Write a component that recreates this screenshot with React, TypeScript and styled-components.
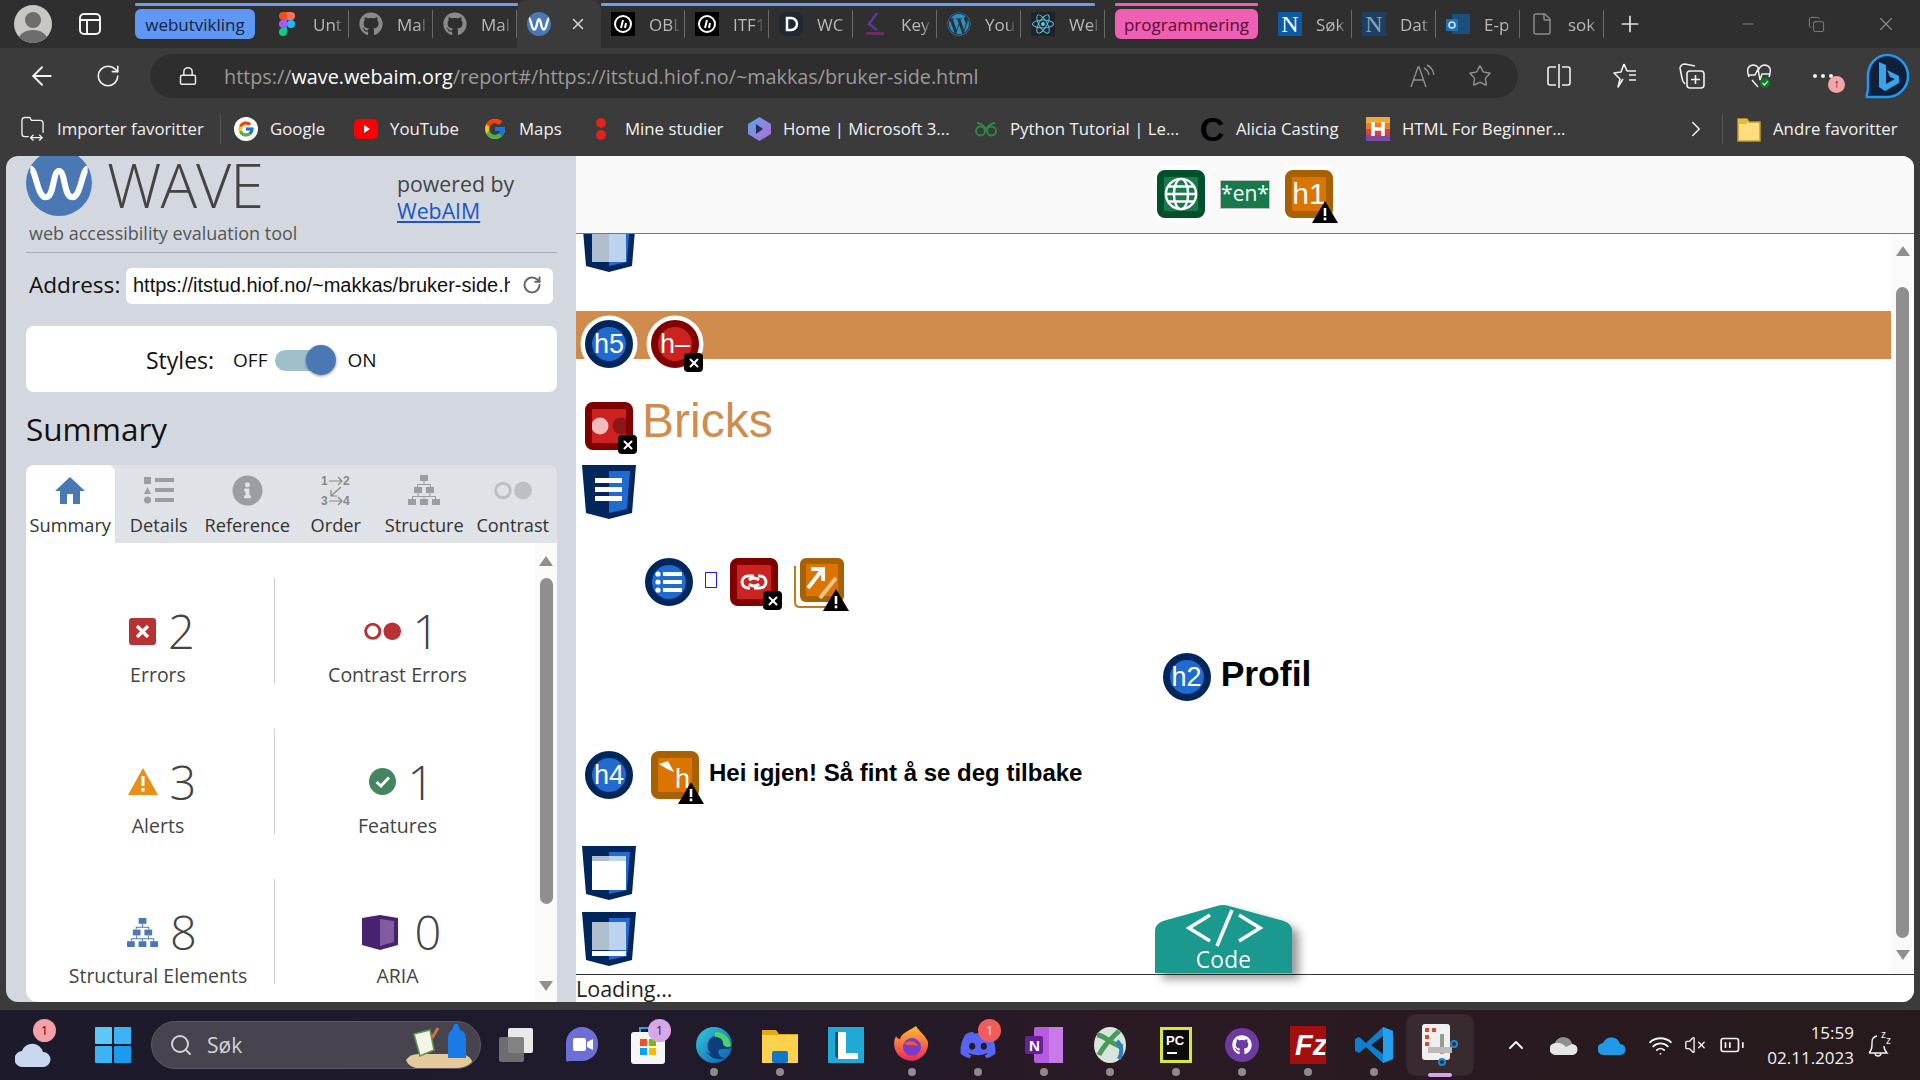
import React from "react";
import styled, { createGlobalStyle } from "styled-components";
import { ArrowLeft, RotateCw, Lock, Star, Plus, Minus, X, Copy, ChevronRight, ChevronUp, Search, Wifi, BatteryMedium, VolumeX, File } from "lucide-react";
import { FaGithub, FaWordpress, FaReact, FaDiscord, FaInfoCircle } from "react-icons/fa";
import { FcGoogle } from "react-icons/fc";

const Global = createGlobalStyle`
  html, body { margin: 0; padding: 0; width: 1920px; height: 1080px; overflow: hidden; background: #3b3b3b; }
  * { box-sizing: border-box; }
`;

const SANS = `"Open Sans", "Noto Sans", sans-serif`;
const ARIAL = `"Liberation Sans", Arial, sans-serif`;

const Page = styled.div`
  width: 1920px; height: 1080px; display: flex; flex-direction: column; overflow: hidden;
  font-family: ${SANS}; background: #3b3b3b;
`;

/* ---------- tab strip ---------- */
const TabStrip = styled.div`
  height: 48px; background: #2f2f2f; display: flex; align-items: stretch; padding-left: 14px; flex: none; position: relative;
`;
const Avatar = styled.div`
  width: 38px; height: 38px; border-radius: 50%; background: #c9c7c3; margin-top: 5px; overflow: hidden; display: flex; flex: none;
`;
const StripButton = styled.div`
  width: 38px; display: flex; align-items: center; justify-content: center; margin-left: 19px; color: #f2f2f2; flex: none;
`;
const GroupChip = styled.div<{ $bg: string; $fg: string; $w: number; $ml: number }>`
  flex: none; width: ${(p) => p.$w}px; margin: 9px 10px 9px ${(p) => p.$ml}px; height: 30px;
  background: ${(p) => p.$bg}; color: ${(p) => p.$fg}; border-radius: 6px; font-size: 17px; display: flex; align-items: center; justify-content: center;
`;
const GroupLine = styled.div<{ $l: number; $w: number; $c: string }>`
  position: absolute; top: 3px; left: ${(p) => p.$l}px; width: ${(p) => p.$w}px; height: 3px; background: ${(p) => p.$c}; border-radius: 1px;
`;
const Tab = styled.div`
  width: 84px; flex: none; display: flex; align-items: center; padding-left: 10px; position: relative; font-size: 17px; color: #b9b9b9; overflow: hidden;
  &::after { content: ""; position: absolute; right: 0; top: 10px; bottom: 10px; width: 1px; background: #6a6a6a; }
`;
const ActiveTab = styled(Tab)`
  background: #3b3b3b; border-radius: 10px 10px 0 0; color: #e8e8e8;
  &::after { display: none; }
`;
const TabIcon = styled.div`
  width: 24px; height: 24px; flex: none; display: flex; align-items: center; justify-content: center; margin-right: 14px;
`;
const TabLabel = styled.span`
  width: 31px; overflow: hidden; white-space: nowrap; flex: none;
  mask-image: linear-gradient(90deg, #000 70%, transparent);
`;
const CloseGlyph = styled.div`
  color: #d8d8d8; display: flex; margin-left: 4px;
`;
const WindowControls = styled.div`
  margin-left: auto; display: flex; color: #8c8c8c;
`;
const WindowControl = styled.div`
  width: 69px; display: flex; align-items: center; justify-content: center;
`;
const NewTab = styled.div`
  width: 52px; display: flex; align-items: center; justify-content: center; color: #e0e0e0; flex: none;
`;
const SquareFav = styled.div<{ $bg: string; $fg?: string }>`
  width: 24px; height: 24px; background: ${(p) => p.$bg}; color: ${(p) => p.$fg || "#fff"}; display: flex; align-items: center; justify-content: center;
  font: 400 24px "Liberation Serif", serif;
`;

/* ---------- toolbar ---------- */
const Toolbar = styled.div`
  height: 60px; flex: none; background: #3b3b3b; display: flex; align-items: center; color: #eee; padding: 0 0 4px 24px;
`;
const ToolButton = styled.div<{ $w?: number }>`
  width: ${(p) => p.$w || 66.5}px; display: flex; align-items: center; justify-content: center; flex: none; position: relative; color: #f0f0f0;
`;
const NavButton = styled.div`
  width: 36px; margin-right: 30px; display: flex; justify-content: center; flex: none; color: #f0f0f0;
`;
const AddressBar = styled.div`
  width: 1368px; height: 44px; margin-left: -6px; background: #2e2e2e; border-radius: 22px; display: flex; align-items: center; padding: 0 26px 0 28px; flex: none;
`;
const UrlLock = styled.div`
  display: flex; color: #e8e8e8; margin-right: 26px;
`;
const Url = styled.div`
  font-size: 19.8px; color: #9a9a9a; white-space: nowrap; flex: 1;
  b { font-weight: 400; color: #fff; }
`;
const UrlAction = styled.div`
  color: #8e8e8e; display: flex; margin-left: 32px;
`;
const Spacer = styled.div`
  width: 8px; flex: none;
`;
const Bing = styled.div`
  width: 46px; height: 46px; margin-left: 10px; display: flex; flex: none;
`;
const NotifyDot = styled.div`
  position: absolute; right: 9px; bottom: -14px; width: 17px; height: 17px; border-radius: 50%; background: #f4a5a5; color: #3a1010; font: 12px/17px ${ARIAL}; text-align: center;
`;

/* ---------- bookmarks ---------- */
const Bookmarks = styled.div`
  height: 48px; flex: none; background: #3b3b3b; display: flex; align-items: center; padding: 0 0 7px 21px; color: #f2f2f2; font-size: 16.8px;
`;
const Bookmark = styled.div<{ $w: number }>`
  display: flex; align-items: center; gap: 12px; width: ${(p) => p.$w}px; flex: none; white-space: nowrap;
`;
const BarSep = styled.div<{ $mr: number }>`
  width: 1px; height: 30px; background: #555; margin-right: ${(p) => p.$mr}px; flex: none;
`;
const BmIcon = styled.div`
  width: 24px; height: 24px; display: flex; align-items: center; justify-content: center; flex: none;
`;
const GoogleDisc = styled.div`
  width: 24px; height: 24px; background: #fff; border-radius: 50%; display: flex; align-items: center; justify-content: center;
`;
const AliciaC = styled.div`
  font: 900 34px "Liberation Sans", sans-serif; color: #000; line-height: 24px;
`;
const ChevronGap = styled.div`
  width: 13px; flex: none;
`;

/* ---------- content frame ---------- */
const Frame = styled.div`
  height: 846px; flex: none; display: flex; padding: 0 6px 0 6px;
`;
const Sidebar = styled.aside`
  width: 570px; flex: none; background: #d3d8e0; border-radius: 12px 0 0 12px; display: flex; flex-direction: column; overflow: hidden; padding: 0 19px 0 20px;
`;
const Masthead = styled.div`
  height: 97px; border-bottom: 1px solid #a9adb3; display: flex; flex: none;
`;
const BrandBlock = styled.div`
  width: 371px; flex: none;
`;
const BrandRow = styled.div`
  display: flex; height: 60px; gap: 15px; align-items: flex-start;
`;
const Logo = styled.svg`
  width: 66px; height: 66px; margin-top: -6px; flex: none;
`;
const WaveWord = styled.div`
  font-weight: 300; font-size: 61px; line-height: 60px; color: #444; letter-spacing: -1px; margin-top: -1px;
`;
const Tagline = styled.div`
  font-size: 18px; color: #555; margin: 5px 0 0 3px; line-height: 24px; white-space: nowrap;
`;
const PoweredBy = styled.div`
  font-size: 21.3px; color: #444; line-height: 33px; padding-top: 11px; white-space: nowrap;
  a { color: #1a56c8; text-decoration: underline; display: block; line-height: 22px; }
`;
const AddressRow = styled.div`
  display: flex; align-items: center; margin-top: 15px; height: 36px; flex: none; padding-left: 3px;
`;
const AddressLabel = styled.label`
  font-size: 22.6px; color: #111; width: 97px; flex: none; margin-top: -3px;
`;
const AddressField = styled.div`
  width: 427px; height: 36px; background: #fff; border-radius: 6px; display: flex; align-items: center; padding: 0 0 2px 7px; font: 20px ${ARIAL}; color: #111; flex: none; position: relative;
`;
const AddressText = styled.div`
  width: 377px; overflow: hidden; white-space: nowrap;
`;
const ReloadMini = styled.div`
  color: #666; display: flex; margin-left: 12px;
`;
const StylesCard = styled.div`
  height: 66px; margin-top: 22px; background: #fff; border-radius: 8px; display: flex; align-items: center; padding: 2px 0 0 120px; flex: none;
`;
const StylesLabel = styled.span`
  font-size: 23px; color: #111; margin-right: 19px;
`;
const SwitchText = styled.span`
  font-size: 19px; color: #111;
`;
const Switch = styled.div`
  width: 55px; height: 21px; background: #9fc0cb; border-radius: 11px; margin: 0 17px 0 8px; position: relative; flex: none;
`;
const Knob = styled.div`
  position: absolute; right: -6px; top: -5px; width: 30px; height: 30px; border-radius: 50%; background: #4a78b5; box-shadow: 0 1px 3px rgba(0, 0, 0, .45);
`;
const SummaryTitle = styled.h2`
  font-weight: 400; font-size: 31.5px; color: #111; margin: 9px 0 0 0; line-height: 56px; flex: none; height: 64px;
`;
const TabRow = styled.div`
  display: flex; height: 78px; background: #dfe2e7; border-radius: 8px 8px 0 0; flex: none;
`;
const PanelTab = styled.div<{ $active?: boolean }>`
  flex: 1; display: flex; flex-direction: column; align-items: center; background: ${(p) => (p.$active ? "#fff" : "transparent")};
  border-radius: 8px 8px 0 0; font-size: 18.2px; color: #333; padding-top: 8px; white-space: nowrap;
`;
const PanelTabIcon = styled.div`
  height: 34px; display: flex; align-items: center; justify-content: center;
`;
const PanelTabLabel = styled.div`
  margin-top: 6px; line-height: 24px;
`;
const Panel = styled.div`
  flex: 1; background: #fff; display: flex; border-radius: 0 0 0 12px; overflow: hidden; min-height: 0;
`;
const StatGrid = styled.div`
  width: 509px; flex: none; display: grid; grid-template-columns: 249px 260px; grid-auto-rows: 105px; row-gap: 45.5px; padding-top: 35px; align-content: start;
`;
const Stat = styled.div<{ $left?: boolean }>`
  display: flex; flex-direction: column; align-items: center; padding-top: 25px;
  ${(p) => (p.$left ? "border-right: 1px solid #cfcfcf; padding-left: 16px;" : "padding-right: 15px;")}
`;
const StatValue = styled.div`
  display: flex; align-items: center; gap: 12px; height: 56px; font-weight: 300; font-size: 47px; color: #444; line-height: 56px; margin-left: 8px;
`;
const StatLabel = styled.div`
  font-size: 19.5px; color: #444; line-height: 30px; margin-top: 1px; white-space: nowrap;
`;
const Rail = styled.div<{ $w: number; $pt: number }>`
  width: ${(p) => p.$w}px; flex: none; background: #fafafa; display: flex; flex-direction: column; align-items: center; padding-top: ${(p) => p.$pt}px;
`;
const RailArrow = styled.div<{ $down?: boolean; $c: string }>`
  width: 0; height: 0; border-left: 7px solid transparent; border-right: 7px solid transparent; flex: none;
  ${(p) => (p.$down ? `border-top: 10px solid ${p.$c};` : `border-bottom: 10px solid ${p.$c};`)}
`;
const RailThumb = styled.div<{ $mt: number; $h: number; $w: number; $c: string }>`
  width: ${(p) => p.$w}px; height: ${(p) => p.$h}px; margin-top: ${(p) => p.$mt}px; background: ${(p) => p.$c}; border-radius: 7px; flex: none;
`;
const RailDown = styled.div<{ $mt: number }>`
  margin-top: ${(p) => p.$mt}px; flex: none;
`;

/* ---------- report ---------- */
const Report = styled.main`
  width: 1338px; flex: none; background: #fff; border-radius: 0 12px 12px 0; display: flex; flex-direction: column; overflow: hidden; position: relative;
`;
const ReportBar = styled.div`
  height: 78px; flex: none; background: #f9f9f9; border-bottom: 1px solid #777; display: flex; align-items: center; justify-content: center; gap: 15px; padding: 0 0 1px 0;
`;
const LangChip = styled.div`
  width: 50px; height: 29px; background: #187a4a; border: 1px solid #c0c0c0; color: #fff; font-size: 21px; line-height: 24px; text-align: center; white-space: nowrap;
`;
const ReportBody = styled.div`
  flex: 1; display: flex; min-height: 0;
`;
const Canvas = styled.div`
  flex: 1; min-width: 0; overflow: hidden;
`;
const CutRow = styled.div`
  height: 77px; padding-left: 6px; overflow: hidden;
`;
const CutShield = styled.div`
  margin-top: -16px;
`;
const Banner = styled.div`
  height: 48px; background: #d08c4c; display: flex; align-items: flex-start; gap: 18px; padding: 9px 0 0 9px;
`;
const BrickRow = styled.div`
  display: flex; padding: 43px 0 0 9px; gap: 9px; height: 106px;
`;
const Bricks = styled.h1`
  margin: -11px 0 0; font: 400 48px ${ARIAL}; color: #d08c4c; line-height: 60px;
`;
const ShieldRow = styled.div<{ $mt?: number }>`
  padding-left: 6px; height: 54px; margin-top: ${(p) => p.$mt || 0}px;
`;
const NavRow = styled.div`
  display: flex; align-items: flex-start; padding-left: 69px; margin-top: 39px; height: 48px;
`;
const Tofu = styled.a`
  width: 12px; height: 16px; border: 1px solid #2020ff; margin: 14px 13px 0 12px; flex: none;
`;
const OrangeGap = styled.div`
  width: 16px; flex: none;
`;
const StackedIcon = styled.div`
  position: relative; width: 50px; height: 50px; flex: none;
`;
const ProfilRow = styled.div`
  display: flex; justify-content: center; gap: 10px; margin-top: 47px; height: 48px; padding-left: 7px;
`;
const ProfilTitle = styled.h2`
  margin: -1px 0 0; font: 700 35.5px ${ARIAL}; color: #000; line-height: 44px;
`;
const GreetRow = styled.div`
  display: flex; gap: 18px; margin-top: 50px; height: 48px; padding-left: 9px; align-items: flex-start;
`;
const Greeting = styled.h4`
  margin: 0 0 0 -8px; font: 700 24px ${ARIAL}; color: #000; line-height: 44px; white-space: nowrap;
`;
const StatusBar = styled.div`
  height: 28px; flex: none; border-top: 1px solid #333; background: #fff; font-size: 21.5px; line-height: 27px; color: #222;
`;
const CodeTab = styled.div`
  position: absolute; left: 579px; top: 749px; width: 137px; height: 68px; filter: drop-shadow(7px 6px 5px rgba(0, 0, 0, .4));
  display: flex; flex-direction: column; align-items: center; color: #fff;
`;
const CodeRoof = styled.svg`
  position: absolute; left: 0; top: 0; width: 137px; height: 68px;
`;
const CodeText = styled.div`
  position: absolute; left: 0; right: 0; bottom: 0; text-align: center; font-size: 23px; line-height: 28px;
`;

/* ---------- WAVE icons ---------- */
const Mark = styled.div<{ $round?: boolean; $rim: string; $fill: string; $size?: number }>`
  width: 48px; height: 48px; flex: none; position: relative; border: 7px solid ${(p) => p.$rim}; background: ${(p) => p.$fill};
  border-radius: ${(p) => (p.$round ? "50%" : "8px")}; display: flex; align-items: center; justify-content: center; color: #fff;
  font: ${(p) => p.$size || 27}px ${ARIAL}; line-height: 1; white-space: nowrap;
`;
const Ringed = styled(Mark)`
  box-shadow: 0 0 0 4.5px #fff;
`;
const XBadge = styled.div`
  position: absolute; right: -11px; bottom: -11px; width: 19px; height: 19px; background: #000; border-radius: 4px; display: flex; align-items: center; justify-content: center; color: #fff;
`;
const WarnBadge = styled.svg`
  position: absolute; right: -12px; bottom: -12px; width: 26px; height: 22px;
`;
const StackedWarn = styled(WarnBadge)`
  right: -5px; bottom: -3px;
`;

const XB = () => (
  <XBadge>
    <X size={14} strokeWidth={3.5} />
  </XBadge>
);
const WarnGlyph = () => (
  <>
    <path d="M13 0 L26 22 H0Z" fill="#000" />
    <rect x="11.7" y="7" width="2.6" height="8" fill="#fff" />
    <rect x="11.7" y="16.5" width="2.6" height="2.8" fill="#fff" />
  </>
);
const WarnB = () => (
  <WarnBadge viewBox="0 0 26 22">
    <WarnGlyph />
  </WarnBadge>
);

type ShieldKind = "box" | "lines" | "top" | "bottom";
const Shield = ({ kind }: { kind: ShieldKind }) => (
  <svg width="54" height="54" viewBox="0 0 54 54" style={{ display: "block" }}>
    <path d="M0 0H54L50 48L27 54L4 48Z" fill="#00265c" />
    <path d="M27 6H48L45 44L27 48Z" fill="#1f6bd0" />
    {kind === "lines" && (
      <g fill="#fff">
        <rect x="13" y="13" width="27" height="5" />
        <rect x="13" y="22" width="27" height="5" />
        <rect x="13" y="31" width="27" height="5" />
      </g>
    )}
    {kind === "box" && (
      <g>
        <rect x="10" y="10" width="17" height="34" fill="#b0bfcf" />
        <rect x="27" y="10" width="17" height="34" fill="#bcd3ee" />
      </g>
    )}
    {kind === "top" && (
      <g>
        <rect x="10" y="10" width="34" height="34" fill="#fff" />
        <rect x="10" y="10" width="17" height="5" fill="#b0bfcf" />
        <rect x="27" y="10" width="17" height="5" fill="#bcd3ee" />
      </g>
    )}
    {kind === "bottom" && (
      <g>
        <rect x="10" y="10" width="17" height="28" fill="#b0bfcf" />
        <rect x="27" y="10" width="17" height="28" fill="#bcd3ee" />
        <rect x="10" y="39" width="34" height="5" fill="#fff" />
      </g>
    )}
  </svg>
);

/* ---------- small drawn favicons ---------- */
const WaveFav = () => (
  <svg width="24" height="24" viewBox="0 0 60 60">
    <circle cx="30" cy="30" r="30" fill="#4a78b5" />
    <path d="M5 16C10 16 11 44 18 44C26 44 24 18 30 18C36 18 34 44 42 44C49 44 50 16 55 16" fill="none" stroke="#fff" strokeWidth="6" />
  </svg>
);
const FigmaFav = () => (
  <svg width="16" height="24" viewBox="0 0 16 24">
    <path d="M8 0H4a4 4 0 0 0 0 8h4z" fill="#f24e1e" />
    <path d="M8 0h4a4 4 0 0 1 0 8H8z" fill="#ff7262" />
    <path d="M8 8H4a4 4 0 0 0 0 8h4z" fill="#a259ff" />
    <circle cx="12" cy="12" r="4" fill="#1abcfe" />
    <path d="M4 16h4v4a4 4 0 1 1-4-4z" fill="#0acf83" />
  </svg>
);
const ThreadFav = () => (
  <svg width="24" height="24" viewBox="0 0 24 24">
    <rect width="24" height="24" fill="#000" />
    <circle cx="12" cy="12" r="8" fill="none" stroke="#fff" strokeWidth="2" />
    <path d="M10 16L12 8M14 16L15 11" stroke="#fff" strokeWidth="2" />
  </svg>
);
const DFav = () => (
  <svg width="24" height="24" viewBox="0 0 24 24">
    <rect width="24" height="24" rx="7" fill="#1f2733" />
    <path d="M8 6h4a6 6 0 0 1 0 12H8z" fill="none" stroke="#fff" strokeWidth="2.5" />
  </svg>
);
const KeyFav = () => (
  <svg width="24" height="24" viewBox="0 0 24 24">
    <path d="M14 1L6 12L14 18" fill="none" stroke="#5b3a96" strokeWidth="2.5" />
    <rect x="3" y="20" width="18" height="3" fill="#6b2f5f" />
  </svg>
);
const OutlookFav = () => (
  <svg width="24" height="24" viewBox="0 0 24 24">
    <rect x="6" y="2" width="18" height="20" fill="#1a4f7e" />
    <rect x="0" y="7" width="12" height="12" fill="#1f6fb2" />
    <circle cx="6" cy="13" r="3" fill="none" stroke="#cfe4f5" strokeWidth="1.6" />
  </svg>
);
const ImportIcon = () => (
  <svg width="25" height="26" viewBox="0 0 25 26" fill="none" stroke="#f2f2f2" strokeWidth="1.4">
    <path d="M8 21H4a3 3 0 0 1-3-3V4a3 3 0 0 1 3-3h5l2 3h9a3 3 0 0 1 3 3v10" />
    <path d="M10 22H22M13 19l-3 3 3 3M19 19l3 3-3 3" />
  </svg>
);
const YtIcon = () => (
  <svg width="24" height="20" viewBox="0 0 24 20">
    <rect width="24" height="20" rx="5" fill="#f00" />
    <path d="M10 6l6 4-6 4z" fill="#fff" />
  </svg>
);
const DotsIcon = () => (
  <svg width="14" height="24" viewBox="0 0 14 24">
    <ellipse cx="7" cy="6" rx="5" ry="5" fill="#e0231c" />
    <ellipse cx="7" cy="18" rx="5" ry="5" fill="#e0231c" />
  </svg>
);
const MsIcon = () => (
  <svg width="23" height="24" viewBox="0 0 23 24">
    <defs>
      <linearGradient id="msg" x1="0" y1="0" x2="1" y2="1">
        <stop offset="0" stopColor="#5aa5ea" />
        <stop offset="1" stopColor="#b46bd8" />
      </linearGradient>
    </defs>
    <path d="M11.5 0L23 7v10L11.5 24L0 17V7z" fill="url(#msg)" />
    <path d="M8 7l7 5-7 5z" fill="#2a2a55" />
  </svg>
);
const GlassesIcon = () => (
  <svg width="24" height="16" viewBox="0 0 24 16" fill="none" stroke="#2e8b46" strokeWidth="1.8">
    <path d="M3 2C6 2 9 4 12 8C15 4 18 2 21 2M12 8" />
    <circle cx="6.500" cy="10" r="4.500" />
    <circle cx="17.500" cy="10" r="4.500" />
  </svg>
);
const HtmlIcon = () => (
  <svg width="24" height="24" viewBox="0 0 24 24">
    <rect width="24" height="6" fill="#f2a83b" />
    <rect y="6" width="24" height="6" fill="#ee7a2c" />
    <rect y="12" width="24" height="6" fill="#d9433f" />
    <rect y="18" width="24" height="6" fill="#7c4a9e" />
    <path d="M7 5v14M17 5v14M7 12h10" stroke="#fff" strokeWidth="3.5" />
  </svg>
);
const FolderIcon = () => (
  <svg width="24" height="26" viewBox="0 0 24 26">
    <path d="M1 3h9l2 3h11v19H1z" fill="#ffdd80" stroke="#c89b2a" strokeWidth="1.5" />
    <path d="M1 3h9v5H1z" fill="#e7b93a" />
  </svg>
);

/* ---------- toolbar icons ---------- */
const ReadAloud = () => (
  <svg width="26" height="24" viewBox="0 0 26 24" fill="none" stroke="#8e8e8e" strokeWidth="1.4">
    <path d="M1 23L8 3H9L16 23M4 16H13" />
    <path d="M14 4Q18 6 19 11M17 1Q23 4 24 11" />
  </svg>
);
const SplitIcon = () => (
  <svg width="24" height="26" viewBox="0 0 24 26" fill="none" stroke="#f0f0f0" strokeWidth="1.6">
    <path d="M9 4H3a2 2 0 0 0-2 2v14a2 2 0 0 0 2 2h6M15 4h6a2 2 0 0 1 2 2v14a2 2 0 0 1-2 2h-6M12 1V25" />
  </svg>
);
const FavListIcon = () => (
  <svg width="26" height="26" viewBox="0 0 26 26" fill="none" stroke="#f0f0f0" strokeWidth="1.6" strokeLinejoin="round">
    <path d="M11 1L14 8H23M16 12H23M16 17H23M10 16L5 24L7 16L1 10L8 9L11 1" />
  </svg>
);
const CollectionsIcon = () => (
  <svg width="26" height="26" viewBox="0 0 26 26" fill="none" stroke="#f0f0f0" strokeWidth="1.6">
    <path d="M16 3L6 1Q2 1 1 5L3 15Q3 18 6 21" />
    <rect x="8" y="8" width="17" height="17" rx="3" />
    <path d="M16.500 12V21M12 16.500H21" />
  </svg>
);
const HealthIcon = () => (
  <svg width="26" height="26" viewBox="0 0 26 26">
    <path d="M3 14Q-1 3 7 2Q11 2 13 6Q15 2 19 2Q27 3 23 14M3 12H9L12 6L14 17L16 11H24M6 17L12 24" fill="none" stroke="#f0f0f0" strokeWidth="1.5" />
    <circle cx="19" cy="20" r="5" fill="#0f7a25" />
    <path d="M16.500 20L18.500 22L22 18" fill="none" stroke="#cde8d2" strokeWidth="1.2" />
  </svg>
);
const DotsMenu = () => (
  <svg width="22" height="6" viewBox="0 0 22 6" fill="#f0f0f0">
    <circle cx="3" cy="3" r="2" />
    <circle cx="11" cy="3" r="2" />
    <circle cx="19" cy="3" r="2" />
  </svg>
);

/* ---------- panel tab icons ---------- */
const HomeIcon = () => (
  <svg width="30" height="27" viewBox="0 0 30 27" fill="#4a78b5">
    <path d="M15 0L30 14H25V27H18V17H12V27H5V14H0Z" />
  </svg>
);
const ListIcon = () => (
  <svg width="30" height="28" viewBox="0 0 30 28" fill="#9a9ea3">
    <rect x="0" y="1" width="7" height="7" />
    <rect x="11" y="2" width="19" height="4" />
    <path d="M3.5 11L7 18H0z" />
    <rect x="11" y="12" width="19" height="4" />
    <circle cx="3.5" cy="24" r="3.5" />
    <rect x="11" y="22" width="19" height="4" />
  </svg>
);
const OrderIcon = () => (
  <svg width="30" height="34" viewBox="0 0 30 34">
    <g fontFamily="Liberation Sans, sans-serif" fontWeight="700" fontSize="12" fill="#888">
      <text x="0" y="12">1</text>
      <text x="22" y="12">2</text>
      <text x="0" y="32">3</text>
      <text x="22" y="32">4</text>
    </g>
    <path d="M8 8H21M17 4l4 4-4 4M8 28H21M17 24l4 4-4 4M20 14L10 23M10 17v6h6" fill="none" stroke="#888" strokeWidth="1.2" />
  </svg>
);
const TreeIcon = ({ color, w, h }: { color: string; w: number; h: number }) => (
  <svg width={w} height={h} viewBox="0 0 32 30" fill={color}>
    <rect x="12" y="0" width="8" height="6" />
    <rect x="6" y="12" width="8" height="6" />
    <rect x="18" y="12" width="8" height="6" />
    <rect x="0" y="24" width="8" height="6" />
    <rect x="12" y="24" width="8" height="6" />
    <rect x="24" y="24" width="8" height="6" />
    <path d="M15.5 6h1v3H23v3h-1v-2H10v2H9V9h6.500zM9.500 18h1v3H28v3h-1v-2H5v2H4v-3h5.500zM15.500 22h1v2h-1zM21.500 18h1v3h-1z" />
  </svg>
);
const ContrastIcon = ({ color, w }: { color: string; w: number }) => (
  <svg width={w} height={w * 0.5} viewBox="0 0 38 19">
    <circle cx="9" cy="9.500" r="7.300" fill="none" stroke={color} strokeWidth="3" />
    <circle cx="29" cy="9.500" r="9" fill={color} />
  </svg>
);
const ErrorIcon = () => (
  <svg width="27" height="27" viewBox="0 0 27 27">
    <rect width="27" height="27" rx="3" fill="#b83233" />
    <path d="M8 8L19 19M19 8L8 19" stroke="#fff" strokeWidth="3.500" />
  </svg>
);
const AlertIcon = () => (
  <svg width="30" height="27" viewBox="0 0 30 27">
    <path d="M15 0L30 27H0Z" fill="#e69016" />
    <rect x="13.500" y="8" width="3" height="10" fill="#fff" />
    <rect x="13.500" y="20" width="3" height="3.500" fill="#fff" />
  </svg>
);
const FeatureIcon = () => (
  <svg width="27" height="27" viewBox="0 0 27 27">
    <circle cx="13.500" cy="13.500" r="13.500" fill="#45855f" />
    <path d="M7.500 14L12 18L20 9.500" fill="none" stroke="#fff" strokeWidth="3" />
  </svg>
);
const AriaIcon = () => (
  <svg width="41" height="35" viewBox="0 0 41 35">
    <path d="M0 3L18 0L36 3V30L18 35L0 30Z" fill="#46226f" />
    <path d="M18 4L32 6V27L18 31Z" fill="#7f5c9f" />
  </svg>
);

/* ---------- taskbar ---------- */
const Taskbar = styled.div`
  height: 71px; margin-top: 7px; flex: none; background: linear-gradient(90deg, #1c1a2b 0%, #201a2c 35%, #2a1a24 60%, #271a1c 100%);
  border-top: 1px solid #3f3a3c; display: flex; align-items: center; position: relative; color: #f2f2f2;
`;
const Weather = styled.div`
  width: 66px; height: 60px; flex: none; position: relative; display: flex; align-items: center; padding-left: 15px; padding-top: 18px;
`;
const StartSlot = styled.div`
  width: 36px; margin-left: 29px; margin-right: 20px; flex: none; display: flex;
`;
const SearchBox = styled.div`
  width: 330px; height: 48px; border-radius: 24px; background: #47434f; border: 1px solid #5d5964; display: flex; align-items: center; padding-left: 17px; font-size: 21px; color: #d4d2d6; flex: none; position: relative;
`;
const SearchArt = styled.svg`
  position: absolute; right: 8px; top: 2px; width: 66px; height: 44px;
`;
const SearchLabel = styled.span`
  margin-left: 14px;
`;
const Apps = styled.div`
  display: flex; margin-left: 2px; flex: none;
`;
const AppSlot = styled.div<{ $active?: boolean }>`
  width: 66px; height: 60px; flex: none; display: flex; align-items: center; justify-content: center; position: relative; border-radius: 8px;
  ${(p) => (p.$active ? "background: rgba(255,255,255,.07); outline: 1px solid rgba(255,255,255,.05);" : "")}
`;
const RunDot = styled.div`
  position: absolute; bottom: -1px; left: 50%; margin-left: -4px; width: 8px; height: 8px; border-radius: 50%; background: #8f8b8d;
`;
const ActiveBar = styled.div`
  position: absolute; bottom: -2px; left: 50%; margin-left: -12px; width: 24px; height: 4px; border-radius: 2px; background: #d7a6e4;
`;
const Count = styled.div<{ $bg: string; $fg: string }>`
  position: absolute; width: 23px; height: 23px; border-radius: 50%; background: ${(p) => p.$bg}; color: ${(p) => p.$fg}; font-size: 13px; line-height: 23px; text-align: center;
  top: 4px; right: 10px;
`;
const Tray = styled.div`
  display: flex; align-items: center; margin-left: 19px; flex: none;
`;
const TrayItem = styled.div<{ $w: number }>`
  width: ${(p) => p.$w}px; display: flex; justify-content: center; flex: none;
`;
const Clock = styled.div`
  width: 102px; text-align: right; font-size: 17px; line-height: 25px; flex: none; margin-left: -6px;
`;
const Bell = styled.div`
  margin-left: 13px; display: flex; flex: none;
`;

const taskIcons: Record<string, React.ReactNode> = {
  task: (
    <svg width="36" height="36" viewBox="0 0 36 36">
      <rect x="10" y="1" width="25" height="25" rx="2" fill="#e9e9e9" />
      <rect x="1" y="10" width="25" height="25" rx="2" fill="#777" opacity=".9" />
    </svg>
  ),
  chat: (
    <svg width="34" height="38" viewBox="0 0 34 38">
      <path d="M17 1a16 16 0 0 1 16 16v2a16 16 0 0 1-16 16H4q-3 2-3-2V17A16 16 0 0 1 17 1z" fill="#6b6fd6" />
      <rect x="8" y="12" width="13" height="13" rx="2" fill="#fff" />
      <path d="M22 16l6-3v11l-6-3z" fill="#fff" />
    </svg>
  ),
  store: (
    <svg width="36" height="38" viewBox="0 0 36 38">
      <path d="M10 6V2h16v4" fill="none" stroke="#2f9be8" strokeWidth="2" />
      <rect x="1" y="6" width="34" height="32" rx="3" fill="#f6f6f6" />
      <rect x="10" y="13" width="7" height="7" fill="#f25022" />
      <rect x="19" y="13" width="7" height="7" fill="#7fba00" />
      <rect x="10" y="22" width="7" height="7" fill="#00a4ef" />
      <rect x="19" y="22" width="7" height="7" fill="#ffb900" />
    </svg>
  ),
  edge: (
    <svg width="38" height="38" viewBox="0 0 38 38">
      <defs>
        <linearGradient id="eg" x1="0" y1="0" x2="1" y2="1">
          <stop offset="0" stopColor="#36c8d8" />
          <stop offset="1" stopColor="#0a5fb5" />
        </linearGradient>
      </defs>
      <circle cx="19" cy="19" r="18" fill="url(#eg)" />
      <path d="M37 22C36 12 28 8 20 10C12 12 10 22 16 28C12 28 10 24 10 20C10 30 22 36 30 32C26 32 22 28 24 24C26 22 34 24 37 22Z" fill="#0c3f7a" />
      <path d="M20 6a15 15 0 0 1 16 14c-2 2-8 1-8-3c0-4-4-6-8-6z" fill="#4fd06a" />
    </svg>
  ),
  files: (
    <svg width="36" height="36" viewBox="0 0 36 36">
      <path d="M0 3h14l3 4h19v29H0z" fill="#e6a817" />
      <rect y="8" width="36" height="28" fill="#ffd24d" />
      <rect x="10" y="24" width="16" height="12" rx="2" fill="#1277c9" />
    </svg>
  ),
  l: (
    <svg width="36" height="36" viewBox="0 0 36 36">
      <rect width="36" height="36" fill="#1fa9d6" />
      <path d="M10 5h8v21h12v6H10z" fill="#fff" />
      <path d="M10 32l-3-3V5h3z" fill="#13527a" />
    </svg>
  ),
  fox: (
    <svg width="36" height="38" viewBox="0 0 36 38">
      <defs>
        <linearGradient id="fg" x1="0" y1="0" x2="0" y2="1">
          <stop offset="0" stopColor="#ffbd2e" />
          <stop offset="1" stopColor="#e9295b" />
        </linearGradient>
      </defs>
      <path d="M22 0c3 5 10 10 12 16a17 17 0 1 1-32-6c1 2 2 3 4 3c1-6 9-8 16-13z" fill="url(#fg)" />
      <circle cx="18" cy="21" r="9" fill="#7a3bc8" />
      <path d="M10 18c4-4 12-4 14 2c-4-2-8 0-14-2z" fill="#f55a36" />
    </svg>
  ),
  onenote: (
    <svg width="38" height="36" viewBox="0 0 38 36">
      <rect x="9" y="0" width="29" height="36" rx="2" fill="#b55ce0" />
      <rect x="24" y="0" width="14" height="36" fill="#c77ae8" />
      <rect x="0" y="9" width="18" height="18" rx="2" fill="#6a1f9a" />
      <text x="4" y="24" fontSize="15" fontFamily="Liberation Sans, sans-serif" fontWeight="700" fill="#fff">N</text>
    </svg>
  ),
  globe: (
    <svg width="34" height="36" viewBox="0 0 34 36">
      <ellipse cx="17" cy="18" rx="16" ry="18" fill="#d8e4dc" />
      <path d="M4 8c8 0 14 10 26 12M6 28c6-12 14-18 20-24" fill="none" stroke="#4a9a5a" strokeWidth="5" />
      <path d="M24 14c4 4 6 10 2 18" fill="none" stroke="#2a7fc0" strokeWidth="4" />
    </svg>
  ),
  pc: (
    <svg width="32" height="36" viewBox="0 0 32 36">
      <rect width="32" height="36" fill="#d8e83a" />
      <rect x="3" y="3" width="26" height="30" fill="#0c0c0c" />
      <text x="6" y="18" fontSize="13" fontFamily="Liberation Sans, sans-serif" fontWeight="700" fill="#fff">PC</text>
      <rect x="7" y="25" width="10" height="2" fill="#fff" />
    </svg>
  ),
  gh: (
    <svg width="34" height="36" viewBox="0 0 34 36">
      <circle cx="17" cy="18" r="17" fill="#6f3ba0" />
      <foreignObject x="7" y="8" width="20" height="20">
        <FaGithub size={20} color="#fff" />
      </foreignObject>
    </svg>
  ),
  fz: (
    <svg width="36" height="38" viewBox="0 0 36 38">
      <rect width="36" height="38" fill="#a40e0e" />
      <text x="5" y="29" fontSize="29" fontStyle="italic" fontFamily="Liberation Sans, sans-serif" fontWeight="700" fill="#fff">Fz</text>
    </svg>
  ),
  code: (
    <svg width="38" height="38" viewBox="0 0 38 38">
      <path d="M28 1L38 5V33L28 37L11 21L4 27L0 25V13L4 11L11 17z" fill="#0c7fd0" />
      <path d="M28 10V28L16 19z" fill="#1c1a20" />
      <path d="M28 1L38 5V33L28 37z" fill="#23a0ee" />
    </svg>
  ),
  snip: (
    <svg width="36" height="42" viewBox="0 0 36 42">
      <rect x="0" y="0" width="28" height="36" rx="3" fill="#f0f0ee" />
      <g fill="#d84a2a">
        <rect x="3" y="4" width="4" height="4" />
        <rect x="10" y="4" width="4" height="4" />
        <rect x="3" y="11" width="4" height="4" />
        <rect x="3" y="18" width="4" height="4" />
      </g>
      <path d="M20 10V30" stroke="#999" strokeWidth="4" />
      <rect x="6" y="23" width="24" height="6" fill="#bbb" />
      <circle cx="32" cy="20" r="3" fill="none" stroke="#1c8ad8" strokeWidth="2" />
      <circle cx="20" cy="38" r="3" fill="none" stroke="#1c8ad8" strokeWidth="2" />
    </svg>
  ),
};

type AppDef = { key: string; dot?: boolean; count?: [string, string]; node?: React.ReactNode; active?: boolean };
const apps: AppDef[] = [
  { key: "task" },
  { key: "chat" },
  { key: "store", count: ["#d6a8e8", "#3a2340"] },
  { key: "edge", dot: true },
  { key: "files", dot: true },
  { key: "l" },
  { key: "fox", dot: true },
  { key: "discord", dot: true, count: ["#f25c5c", "#fff"], node: <FaDiscord size={38} color="#5865f2" /> },
  { key: "onenote", dot: true },
  { key: "globe", dot: true },
  { key: "pc", dot: true },
  { key: "gh", dot: true },
  { key: "fz", dot: true },
  { key: "code", dot: true },
  { key: "snip", active: true },
];

const tabsA: [React.ReactNode, string][] = [
  [<FigmaFav />, "Unt"],
  [<FaGithub size={24} color="#8a8a8a" />, "Mal"],
  [<FaGithub size={24} color="#8a8a8a" />, "Mal"],
];
const tabsB: [React.ReactNode, string][] = [
  [<ThreadFav />, "OBL"],
  [<ThreadFav />, "ITF1"],
  [<DFav />, "WC"],
  [<KeyFav />, "Key"],
  [<FaWordpress size={24} color="#2a8fc4" />, "You"],
  [<SquareFav $bg="#20232a"><FaReact size={22} color="#61c8e0" /></SquareFav>, "Wel"],
];
const tabsC: [React.ReactNode, string][] = [
  [<SquareFav $bg="#0b5aa5">N</SquareFav>, "Søk"],
  [<SquareFav $bg="#1d3f63" $fg="#8aa0b6">N</SquareFav>, "Dat"],
  [<OutlookFav />, "E-p"],
  [<File size={26} color="#8a8a8a" strokeWidth={1.5} />, "sok"],
];

const TabItem = ({ icon, label }: { icon: React.ReactNode; label: string }) => (
  <Tab>
    <TabIcon>{icon}</TabIcon>
    <TabLabel>{label}</TabLabel>
  </Tab>
);

const stats: { icon: React.ReactNode; value: string; label: string }[] = [
  { icon: <ErrorIcon />, value: "2", label: "Errors" },
  { icon: <ContrastIcon color="#b83233" w={37} />, value: "1", label: "Contrast Errors" },
  { icon: <AlertIcon />, value: "3", label: "Alerts" },
  { icon: <FeatureIcon />, value: "1", label: "Features" },
  { icon: <TreeIcon color="#4a78b5" w={31} h={29} />, value: "8", label: "Structural Elements" },
  { icon: <AriaIcon />, value: "0", label: "ARIA" },
];

export default function App() {
  return (
    <Page>
      <Global />
      <TabStrip>
        <GroupLine $l={135} $w={383} $c="#6c9cf0" />
        <GroupLine $l={529} $w={58} $c="#6c9cf0" />
        <GroupLine $l={601} $w={494} $c="#6c9cf0" />
        <GroupLine $l={1115} $w={143} $c="#ef5fb4" />
        <Avatar>
          <svg width="38" height="38" viewBox="0 0 38 38">
            <circle cx="19" cy="15" r="8" fill="#6d6d6d" />
            <ellipse cx="19" cy="36" rx="15" ry="11" fill="#6d6d6d" />
          </svg>
        </Avatar>
        <StripButton>
          <svg width="22" height="22" viewBox="0 0 22 22" fill="none" stroke="currentColor" strokeWidth="2">
            <rect x="1" y="1" width="20" height="20" rx="4" />
            <path d="M1 7H21M8 7V21" />
          </svg>
        </StripButton>
        <GroupChip $bg="#5f97f5" $fg="#14233f" $w={120} $ml={26}>webutvikling</GroupChip>
        {tabsA.map(([icon, label], i) => (
          <TabItem key={i} icon={icon} label={label} />
        ))}
        <ActiveTab>
          <TabIcon><WaveFav /></TabIcon>
          <CloseGlyph><X size={18} /></CloseGlyph>
        </ActiveTab>
        {tabsB.map(([icon, label], i) => (
          <TabItem key={i} icon={icon} label={label} />
        ))}
        <GroupChip $bg="#ef5fb4" $fg="#5a0a2f" $w={143} $ml={10}>programmering</GroupChip>
        {tabsC.map(([icon, label], i) => (
          <TabItem key={i} icon={icon} label={label} />
        ))}
        <NewTab><Plus size={26} strokeWidth={1.6} /></NewTab>
        <WindowControls>
          <WindowControl><Minus size={18} strokeWidth={1.2} /></WindowControl>
          <WindowControl><Copy size={17} strokeWidth={1.2} /></WindowControl>
          <WindowControl><X size={22} strokeWidth={1.2} /></WindowControl>
        </WindowControls>
      </TabStrip>

      <Toolbar>
        <NavButton><ArrowLeft size={30} strokeWidth={1.5} /></NavButton>
        <NavButton><RotateCw size={26} strokeWidth={1.5} /></NavButton>
        <AddressBar>
          <UrlLock><Lock size={20} strokeWidth={1.8} /></UrlLock>
          <Url>https://<b>wave.webaim.org</b>/report#/https://itstud.hiof.no/~makkas/bruker-side.html</Url>
          <UrlAction><ReadAloud /></UrlAction>
          <UrlAction><Star size={24} strokeWidth={1.5} /></UrlAction>
        </AddressBar>
        <Spacer />
        <ToolButton><SplitIcon /></ToolButton>
        <ToolButton><FavListIcon /></ToolButton>
        <ToolButton><CollectionsIcon /></ToolButton>
        <ToolButton><HealthIcon /></ToolButton>
        <ToolButton $w={62}>
          <DotsMenu />
          <NotifyDot>↑</NotifyDot>
        </ToolButton>
        <Bing>
          <svg width="46" height="46" viewBox="0 0 46 46">
            <path d="M23 2a21 21 0 0 1 21 21a21 21 0 0 1-21 21H4q-2 0-1-3q1-3 1-6V23A19 21 0 0 1 23 2z" fill="#10203a" stroke="#1e9bf0" strokeWidth="2.500" />
            <path d="M15 9l7 3v19l9-5-5-2-3-7 12 6v7l-14 8-6-4z" fill="#38a4ec" />
          </svg>
        </Bing>
      </Toolbar>

      <Bookmarks>
        <Bookmark $w={199}><BmIcon><ImportIcon /></BmIcon>Importer favoritter</Bookmark>
        <BarSep $mr={13} />
        <Bookmark $w={120}><BmIcon><GoogleDisc><FcGoogle size={18} /></GoogleDisc></BmIcon>Google</Bookmark>
        <Bookmark $w={129}><BmIcon><YtIcon /></BmIcon>YouTube</Bookmark>
        <Bookmark $w={106}><BmIcon><FcGoogle size={24} /></BmIcon>Maps</Bookmark>
        <Bookmark $w={158}><BmIcon><DotsIcon /></BmIcon>Mine studier</Bookmark>
        <Bookmark $w={227}><BmIcon><MsIcon /></BmIcon>Home | Microsoft 3...</Bookmark>
        <Bookmark $w={226}><BmIcon><GlassesIcon /></BmIcon>Python Tutorial | Le...</Bookmark>
        <Bookmark $w={166}><BmIcon><AliciaC>C</AliciaC></BmIcon>Alicia Casting</Bookmark>
        <Bookmark $w={317}><BmIcon><HtmlIcon /></BmIcon>HTML For Beginner...</Bookmark>
        <ChevronRight size={26} strokeWidth={1.4} />
        <ChevronGap />
        <BarSep $mr={14} />
        <Bookmark $w={170}><BmIcon><FolderIcon /></BmIcon>Andre favoritter</Bookmark>
      </Bookmarks>

      <Frame>
        <Sidebar>
          <Masthead>
            <BrandBlock>
              <BrandRow>
                <Logo viewBox="0 0 60 60">
                  <circle cx="30" cy="30" r="30" fill="#4a78b5" />
                  <path d="M4 17C9 17 10 43 18 43C26 43 24 19 30 19C36 19 34 43 42 43C50 43 51 17 56 17" fill="none" stroke="#fff" strokeWidth="5.500" />
                </Logo>
                <WaveWord>WAVE</WaveWord>
              </BrandRow>
              <Tagline>web accessibility evaluation tool</Tagline>
            </BrandBlock>
            <PoweredBy>powered by<a href="#webaim">WebAIM</a></PoweredBy>
          </Masthead>
          <AddressRow>
            <AddressLabel>Address:</AddressLabel>
            <AddressField>
              <AddressText>https://itstud.hiof.no/~makkas/bruker-side.html</AddressText>
              <ReloadMini><RotateCw size={20} strokeWidth={2.4} /></ReloadMini>
            </AddressField>
          </AddressRow>
          <StylesCard>
            <StylesLabel>Styles:</StylesLabel>
            <SwitchText>OFF</SwitchText>
            <Switch><Knob /></Switch>
            <SwitchText>ON</SwitchText>
          </StylesCard>
          <SummaryTitle>Summary</SummaryTitle>
          <TabRow>
            <PanelTab $active><PanelTabIcon><HomeIcon /></PanelTabIcon><PanelTabLabel>Summary</PanelTabLabel></PanelTab>
            <PanelTab><PanelTabIcon><ListIcon /></PanelTabIcon><PanelTabLabel>Details</PanelTabLabel></PanelTab>
            <PanelTab><PanelTabIcon><FaInfoCircle size={31} color="#9a9ea3" /></PanelTabIcon><PanelTabLabel>Reference</PanelTabLabel></PanelTab>
            <PanelTab><PanelTabIcon><OrderIcon /></PanelTabIcon><PanelTabLabel>Order</PanelTabLabel></PanelTab>
            <PanelTab><PanelTabIcon><TreeIcon color="#9a9ea3" w={32} h={30} /></PanelTabIcon><PanelTabLabel>Structure</PanelTabLabel></PanelTab>
            <PanelTab><PanelTabIcon><ContrastIcon color="#bcbfc3" w={38} /></PanelTabIcon><PanelTabLabel>Contrast</PanelTabLabel></PanelTab>
          </TabRow>
          <Panel>
            <StatGrid>
              {stats.map((s, i) => (
                <Stat key={s.label} $left={i % 2 === 0}>
                  <StatValue>{s.icon}<span>{s.value}</span></StatValue>
                  <StatLabel>{s.label}</StatLabel>
                </Stat>
              ))}
            </StatGrid>
            <Rail $w={22} $pt={13}>
              <RailArrow $c="#8f8f8f" />
              <RailThumb $mt={12} $h={326} $w={13} $c="#8f8f8f" />
              <RailDown $mt={77}><RailArrow $down $c="#8f8f8f" /></RailDown>
            </Rail>
          </Panel>
        </Sidebar>

        <Report>
          <ReportBar>
            <Ringed $rim="#00502a" $fill="#187a4a">
              <svg width="36" height="36" viewBox="0 0 36 36" fill="none" stroke="#fff" strokeWidth="2.600">
                <circle cx="18" cy="18" r="16" />
                <ellipse cx="18" cy="18" rx="7.500" ry="16" />
                <path d="M2 18H34M4.500 10H31.500M4.500 26H31.500" />
              </svg>
            </Ringed>
            <LangChip>*en*</LangChip>
            <Ringed $rim="#a86100" $fill="#db7500" $size={30}>h1<WarnB /></Ringed>
          </ReportBar>
          <ReportBody>
            <Canvas>
              <CutRow><CutShield><Shield kind="box" /></CutShield></CutRow>
              <Banner>
                <Ringed $round $rim="#00265c" $fill="#1f6bd0">h5</Ringed>
                <Ringed $round $rim="#800000" $fill="#cc2222">h–<XB /></Ringed>
              </Banner>
              <BrickRow>
                <Mark $rim="#800000" $fill="#cc2222">
                  <svg width="34" height="18" viewBox="0 0 34 18">
                    <circle cx="8" cy="9" r="8.500" fill="#f0bcbc" />
                    <circle cx="29" cy="9" r="8.500" fill="#8e1616" />
                  </svg>
                  <XB />
                </Mark>
                <Bricks>Bricks</Bricks>
              </BrickRow>
              <ShieldRow><Shield kind="lines" /></ShieldRow>
              <NavRow>
                <Mark $round $rim="#00265c" $fill="#1f6bd0">
                  <svg width="28" height="24" viewBox="0 0 28 24" fill="#fff">
                    <circle cx="3" cy="4" r="2.600" />
                    <rect x="8" y="2" width="19" height="4" />
                    <circle cx="3" cy="12" r="2.600" />
                    <rect x="8" y="10" width="19" height="4" />
                    <circle cx="3" cy="20" r="2.600" />
                    <rect x="8" y="18" width="19" height="4" />
                  </svg>
                </Mark>
                <Tofu href="#empty" />
                <Mark $rim="#800000" $fill="#cc2222">
                  <svg width="30" height="24" viewBox="0 0 30 24" fill="none" stroke="#fff" strokeWidth="3">
                    <path d="M15 6H9a6 6 0 0 0 0 12h2" />
                    <path d="M15 18h6a6 6 0 0 0 0-12h-2" />
                    <path d="M10 10Q15 6 20 10M10 14Q15 18 20 14" />
                  </svg>
                  <XB />
                </Mark>
                <OrangeGap />
                <StackedIcon>
                  <svg width="50" height="50" viewBox="0 0 50 50">
                    <path d="M1 8V44Q1 49 6 49H44" fill="none" stroke="#c07a1a" strokeWidth="2" />
                    <rect x="6" y="0" width="44" height="44" rx="6" fill="#a86100" />
                    <rect x="12" y="6" width="32" height="32" fill="#db7500" />
                    <path d="M14 30L28 12M17 11H29V23" fill="none" stroke="#fff" strokeWidth="4" />
                    <path d="M26 40L42 20" fill="none" stroke="#f2c08c" strokeWidth="4" />
                  </svg>
                  <StackedWarn viewBox="0 0 26 22"><WarnGlyph /></StackedWarn>
                </StackedIcon>
              </NavRow>
              <ProfilRow>
                <Mark $round $rim="#00265c" $fill="#1f6bd0">h2</Mark>
                <ProfilTitle>Profil</ProfilTitle>
              </ProfilRow>
              <GreetRow>
                <Mark $round $rim="#00265c" $fill="#1f6bd0">h4</Mark>
                <Mark $rim="#a86100" $fill="#db7500">
                  <svg width="34" height="34" viewBox="0 0 34 34">
                    <path d="M1 6L10 3L16 14L9 11z" fill="#fff" />
                    <text x="17" y="30" fontFamily="Liberation Sans, sans-serif" fontSize="27" fill="#fff">h</text>
                  </svg>
                  <WarnB />
                </Mark>
                <Greeting>Hei igjen! Så fint å se deg tilbake</Greeting>
              </GreetRow>
              <ShieldRow $mt={47}><Shield kind="top" /></ShieldRow>
              <ShieldRow $mt={12}><Shield kind="bottom" /></ShieldRow>
            </Canvas>
            <Rail $w={23} $pt={12}>
              <RailArrow $c="#8f8f8f" />
              <RailThumb $mt={31} $h={651} $w={13} $c="#8f8f8f" />
              <RailDown $mt={12}><RailArrow $down $c="#8f8f8f" /></RailDown>
            </Rail>
          </ReportBody>
          <StatusBar>Loading...</StatusBar>
          <CodeTab>
            <CodeRoof viewBox="0 0 137 68">
              <path d="M0 68V26Q0 19 8 16L62 1Q68 -1 74 1L129 16Q137 19 137 26V68Z" fill="#1a9a8f" />
              <path d="M55 10L34 23L55 36M84 10L105 23L84 36M77 5L62 41" fill="none" stroke="#fff" strokeWidth="3.600" />
            </CodeRoof>
            <CodeText>Code</CodeText>
          </CodeTab>
        </Report>
      </Frame>

      <Taskbar>
        <Weather>
          <svg width="36" height="26" viewBox="0 0 36 26">
            <path d="M8 26a8 8 0 0 1-1-16a11 11 0 0 1 21 1a7.500 7.500 0 0 1 0 15z" fill="#c9d8f0" />
          </svg>
          <Count $bg="#f8a0a8" $fg="#3a1518">1</Count>
        </Weather>
        <StartSlot>
          <svg width="36" height="36" viewBox="0 0 36 36">
            <rect width="17" height="17" rx="1" fill="#5cc8f8" />
            <rect x="19" width="17" height="17" rx="1" fill="#3bb3f5" />
            <rect y="19" width="17" height="17" rx="1" fill="#3bb3f5" />
            <rect x="19" y="19" width="17" height="17" rx="1" fill="#1a9bf0" />
          </svg>
        </StartSlot>
        <SearchBox>
          <Search size={24} strokeWidth={2} />
          <SearchLabel>Søk</SearchLabel>
          <SearchArt viewBox="0 0 66 44">
            <path d="M0 36Q4 30 12 30H58Q66 34 66 38Q60 44 50 44H10Q2 42 0 36Z" fill="#e5c99a" />
            <path d="M8 10L24 6L28 26L14 32Z" fill="#f4f4e8" stroke="#5a9a50" strokeWidth="1.500" />
            <path d="M26 14L32 4" stroke="#d8703a" strokeWidth="3" />
            <path d="M42 30V14Q42 8 46 6L48 0L52 0L54 6Q60 8 60 14V34H42Z" fill="#1a7ae8" />
          </SearchArt>
        </SearchBox>
        <Apps>
          {apps.map((a) => (
            <AppSlot key={a.key} $active={a.active}>
              {a.node ?? taskIcons[a.key]}
              {a.dot && <RunDot />}
              {a.active && <ActiveBar />}
              {a.count && <Count $bg={a.count[0]} $fg={a.count[1]}>1</Count>}
            </AppSlot>
          ))}
        </Apps>
        <Tray>
          <TrayItem $w={48}><ChevronUp size={24} /></TrayItem>
          <TrayItem $w={48}>
            <svg width="28" height="20" viewBox="0 0 28 20">
              <path d="M6 20a6 6 0 0 1-1-12a9 9 0 0 1 17 1a5.500 5.500 0 0 1 0 11z" fill="#e6e6e6" />
              <path d="M5 8a9 9 0 0 1 17 1l-6 3q-5-5-11-4z" fill="#8f8f8f" />
            </svg>
          </TrayItem>
          <TrayItem $w={48}>
            <svg width="28" height="20" viewBox="0 0 28 20">
              <path d="M6 20a6 6 0 0 1-1-12a9 9 0 0 1 17 1a5.500 5.500 0 0 1 0 11z" fill="#1f9ae8" />
            </svg>
          </TrayItem>
          <TrayItem $w={48}><Wifi size={25} strokeWidth={1.8} /></TrayItem>
          <TrayItem $w={22}><VolumeX size={24} strokeWidth={1.5} /></TrayItem>
          <TrayItem $w={52}><BatteryMedium size={26} strokeWidth={1.6} /></TrayItem>
          <Clock>15:59<br />02.11.2023</Clock>
          <Bell>
            <svg width="26" height="30" viewBox="0 0 26 30" fill="none" stroke="#f2f2f2" strokeWidth="1.4">
              <path d="M2 23Q5 20 5 15V12Q5 7 10 6M2 23H20Q17 20 17 16M8 23a3 3 0 0 0 6 0" />
              <text x="14" y="8" fontSize="10" fontFamily="Liberation Sans, sans-serif" fill="#f2f2f2" stroke="none">z</text>
              <text x="19" y="14" fontSize="10" fontFamily="Liberation Sans, sans-serif" fill="#f2f2f2" stroke="none">z</text>
            </svg>
          </Bell>
        </Tray>
      </Taskbar>
    </Page>
  );
}
